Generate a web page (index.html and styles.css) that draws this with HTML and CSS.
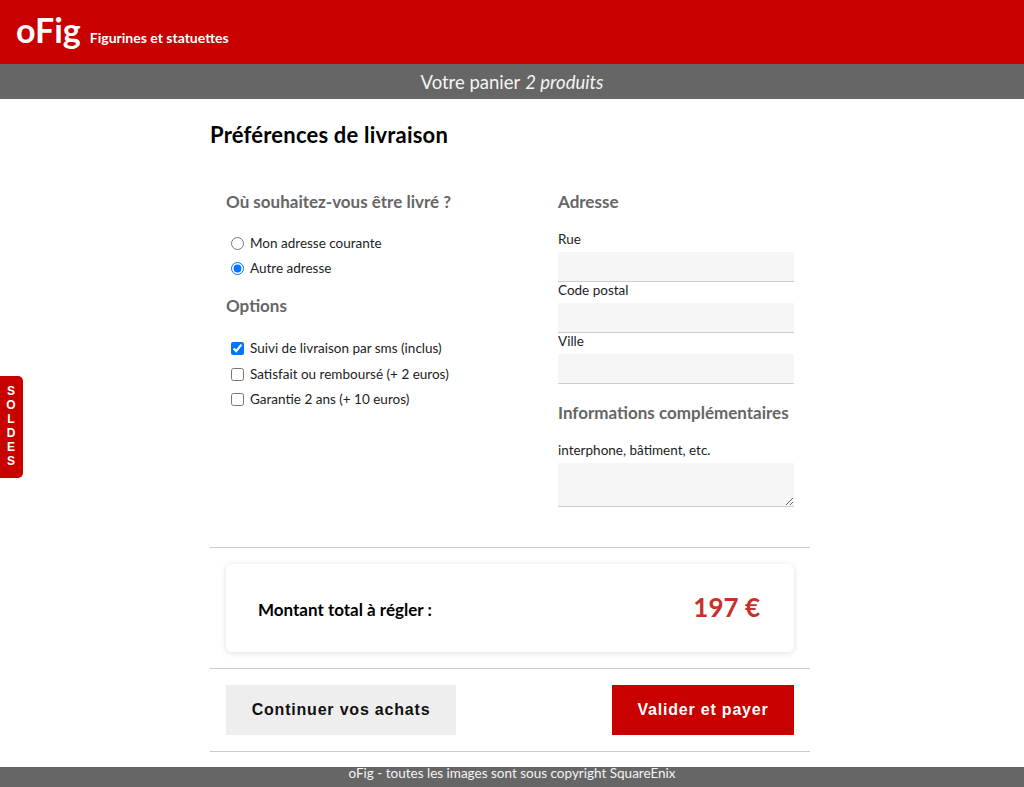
FILE: index.html
```html
<!DOCTYPE html>
<html lang="fr">
<head>
<meta charset="utf-8">
<title>oFig - Panier</title>
<link rel="stylesheet" href="styles.css">
</head>
<body>
<header class="header">
  <span class="logo">oFig</span>
  <span class="tagline">Figurines et statuettes</span>
</header>
<div class="cartbar">Votre panier <em>2 produits</em></div>
<a class="soldes" href="#">S<br>O<br>L<br>D<br>E<br>S</a>
<main class="main">
  <h1 class="title">Préférences de livraison</h1>
  <div class="cols">
    <div class="col-left">
      <h2 class="subtitle">Où souhaitez-vous être livré ?</h2>
      <div class="choices">
        <label class="choice"><input type="radio" name="where"> Mon adresse courante</label>
        <label class="choice"><input type="radio" name="where" checked> Autre adresse</label>
      </div>
      <h2 class="subtitle sub-options">Options</h2>
      <div class="choices checks">
        <label class="choice"><input type="checkbox" checked> Suivi de livraison par sms (inclus)</label>
        <label class="choice"><input type="checkbox"> Satisfait ou remboursé (+ 2 euros)</label>
        <label class="choice"><input type="checkbox"> Garantie 2 ans (+ 10 euros)</label>
      </div>
    </div>
    <div class="col-right">
      <h2 class="subtitle">Adresse</h2>
      <div class="fields">
        <label class="field"><span class="flabel">Rue</span><input class="finput" type="text"></label>
        <label class="field"><span class="flabel">Code postal</span><input class="finput" type="text"></label>
        <label class="field"><span class="flabel">Ville</span><input class="finput" type="text"></label>
      </div>
      <h2 class="subtitle sub-info">Informations complémentaires</h2>
      <label class="field field-info"><span class="flabel">interphone, bâtiment, etc.</span><textarea class="farea"></textarea></label>
    </div>
  </div>
  <hr class="sep sep-top">
  <div class="total">
    <span class="total-label">Montant total à régler :</span>
    <span class="total-price">197 €</span>
  </div>
  <hr class="sep">
  <div class="actions">
    <a class="btn btn-grey" href="#">Continuer vos achats</a>
    <a class="btn btn-red" href="#">Valider et payer</a>
  </div>
  <hr class="sep">
</main>
<footer class="footer">oFig - toutes les images sont sous copyright SquareEnix</footer>
</body>
</html>
```
FILE: styles.css
```css
* { box-sizing: border-box; }
html, body { margin: 0; padding: 0; }
body {
  font-family: "Lato", "Open Sans", sans-serif;
  color: #111;
  background: #fff;
}
.header {
  height: 64px;
  background: #c90000;
  color: #fff;
  display: flex;
  align-items: center;
  padding: 0 16px;
  gap: 9px;
}
.logo { font-size: 34px; font-weight: 700; line-height: 40px; margin-top: -4px; }
.tagline { font-size: 14px; font-weight: 700; margin-top: 10px; }
.cartbar {
  height: 35px;
  background: #666;
  color: #f4f4f4;
  font-size: 18.5px;
  display: flex;
  align-items: center;
  justify-content: center;
  gap: 5px;
}
.cartbar em { font-style: italic; }
.soldes {
  position: absolute;
  left: 0;
  top: 376px;
  width: 23px;
  height: 102px;
  background: #c90000;
  border-radius: 0 5px 5px 0;
  color: #fff;
  font-family: "Liberation Sans", Arial, sans-serif;
  font-weight: 700;
  font-size: 12px;
  line-height: 14px;
  text-align: center;
  text-decoration: none;
  padding-top: 8px;
  padding-right: 1px;
}
.main {
  width: 600px;
  margin: 0 0 0 calc(50% - 302px);
}
.title {
  margin: 0;
  padding-top: 23px;
  font-size: 22px;
  font-weight: 700;
  line-height: 26px;
  letter-spacing: 0.2px;
  color: #000;
}
.cols {
  display: grid;
  grid-template-columns: 332px 236px;
  padding: 0 16px;
  margin-top: 44px;
}
.subtitle {
  margin: 0;
  font-size: 17px;
  font-weight: 700;
  color: #666;
  line-height: 20px;
}
.choices {
  display: flex;
  flex-direction: column;
  gap: 6px;
  margin-top: 22px;
  padding-left: 1px;
}
.checks { gap: 6.5px; margin-top: 23px; }
.choice {
  font-size: 13.5px;
  color: #222;
  display: flex;
  align-items: center;
  line-height: 19px;
}
.choice input { margin: 0 6px 0 4px; }
.sub-options { margin-top: 18px; }
.fields { margin-top: 19px; display: flex; flex-direction: column; }
.field { display: flex; flex-direction: column; }
.flabel { font-size: 13.5px; color: #222; line-height: 17px; }
.finput {
  margin-top: 4px;
  height: 30px;
  border: 0;
  border-bottom: 1px solid #ccc;
  background: #f6f6f6;
  width: 236px;
  display: block;
}
.sub-info { margin-top: 19px; }
.field-info { margin-top: 19px; }
.farea {
  margin-top: 4px;
  height: 44px;
  width: 236px;
  border: 0;
  border-bottom: 1px solid #ccc;
  background: #f6f6f6;
  resize: vertical;
  display: block;
}
.sep {
  border: 0;
  border-top: 1px solid #ccc;
  margin: 0;
}
.sep-top { margin-top: 40px; }
.total {
  margin: 16px 16px;
  height: 88px;
  border-radius: 6px;
  box-shadow: 0 1px 6px rgba(0,0,0,0.13);
  display: flex;
  align-items: center;
  justify-content: space-between;
  padding: 0 34px 0 32px;
}
.total-label { font-size: 17px; font-weight: 700; color: #000; margin-top: 2px; }
.total-price { font-size: 26px; font-weight: 700; color: #c9302c; margin-top: -2px; }
.actions {
  display: flex;
  justify-content: space-between;
  padding: 16px 16px;
}
.btn {
  height: 50px;
  display: flex;
  align-items: center;
  justify-content: center;
  font-family: "Liberation Sans", Arial, sans-serif;
  font-weight: 700;
  font-size: 16px;
  letter-spacing: 0.8px;
  text-decoration: none;
}
.btn-grey { width: 230px; background: #eee; color: #111; }
.btn-red { width: 182px; background: #c90000; color: #fff; }
.footer {
  margin-top: 15px;
  height: 20px;
  background: #666;
  color: #f4f4f4;
  font-size: 13.5px;
  text-align: center;
  line-height: 13px;
}
```
